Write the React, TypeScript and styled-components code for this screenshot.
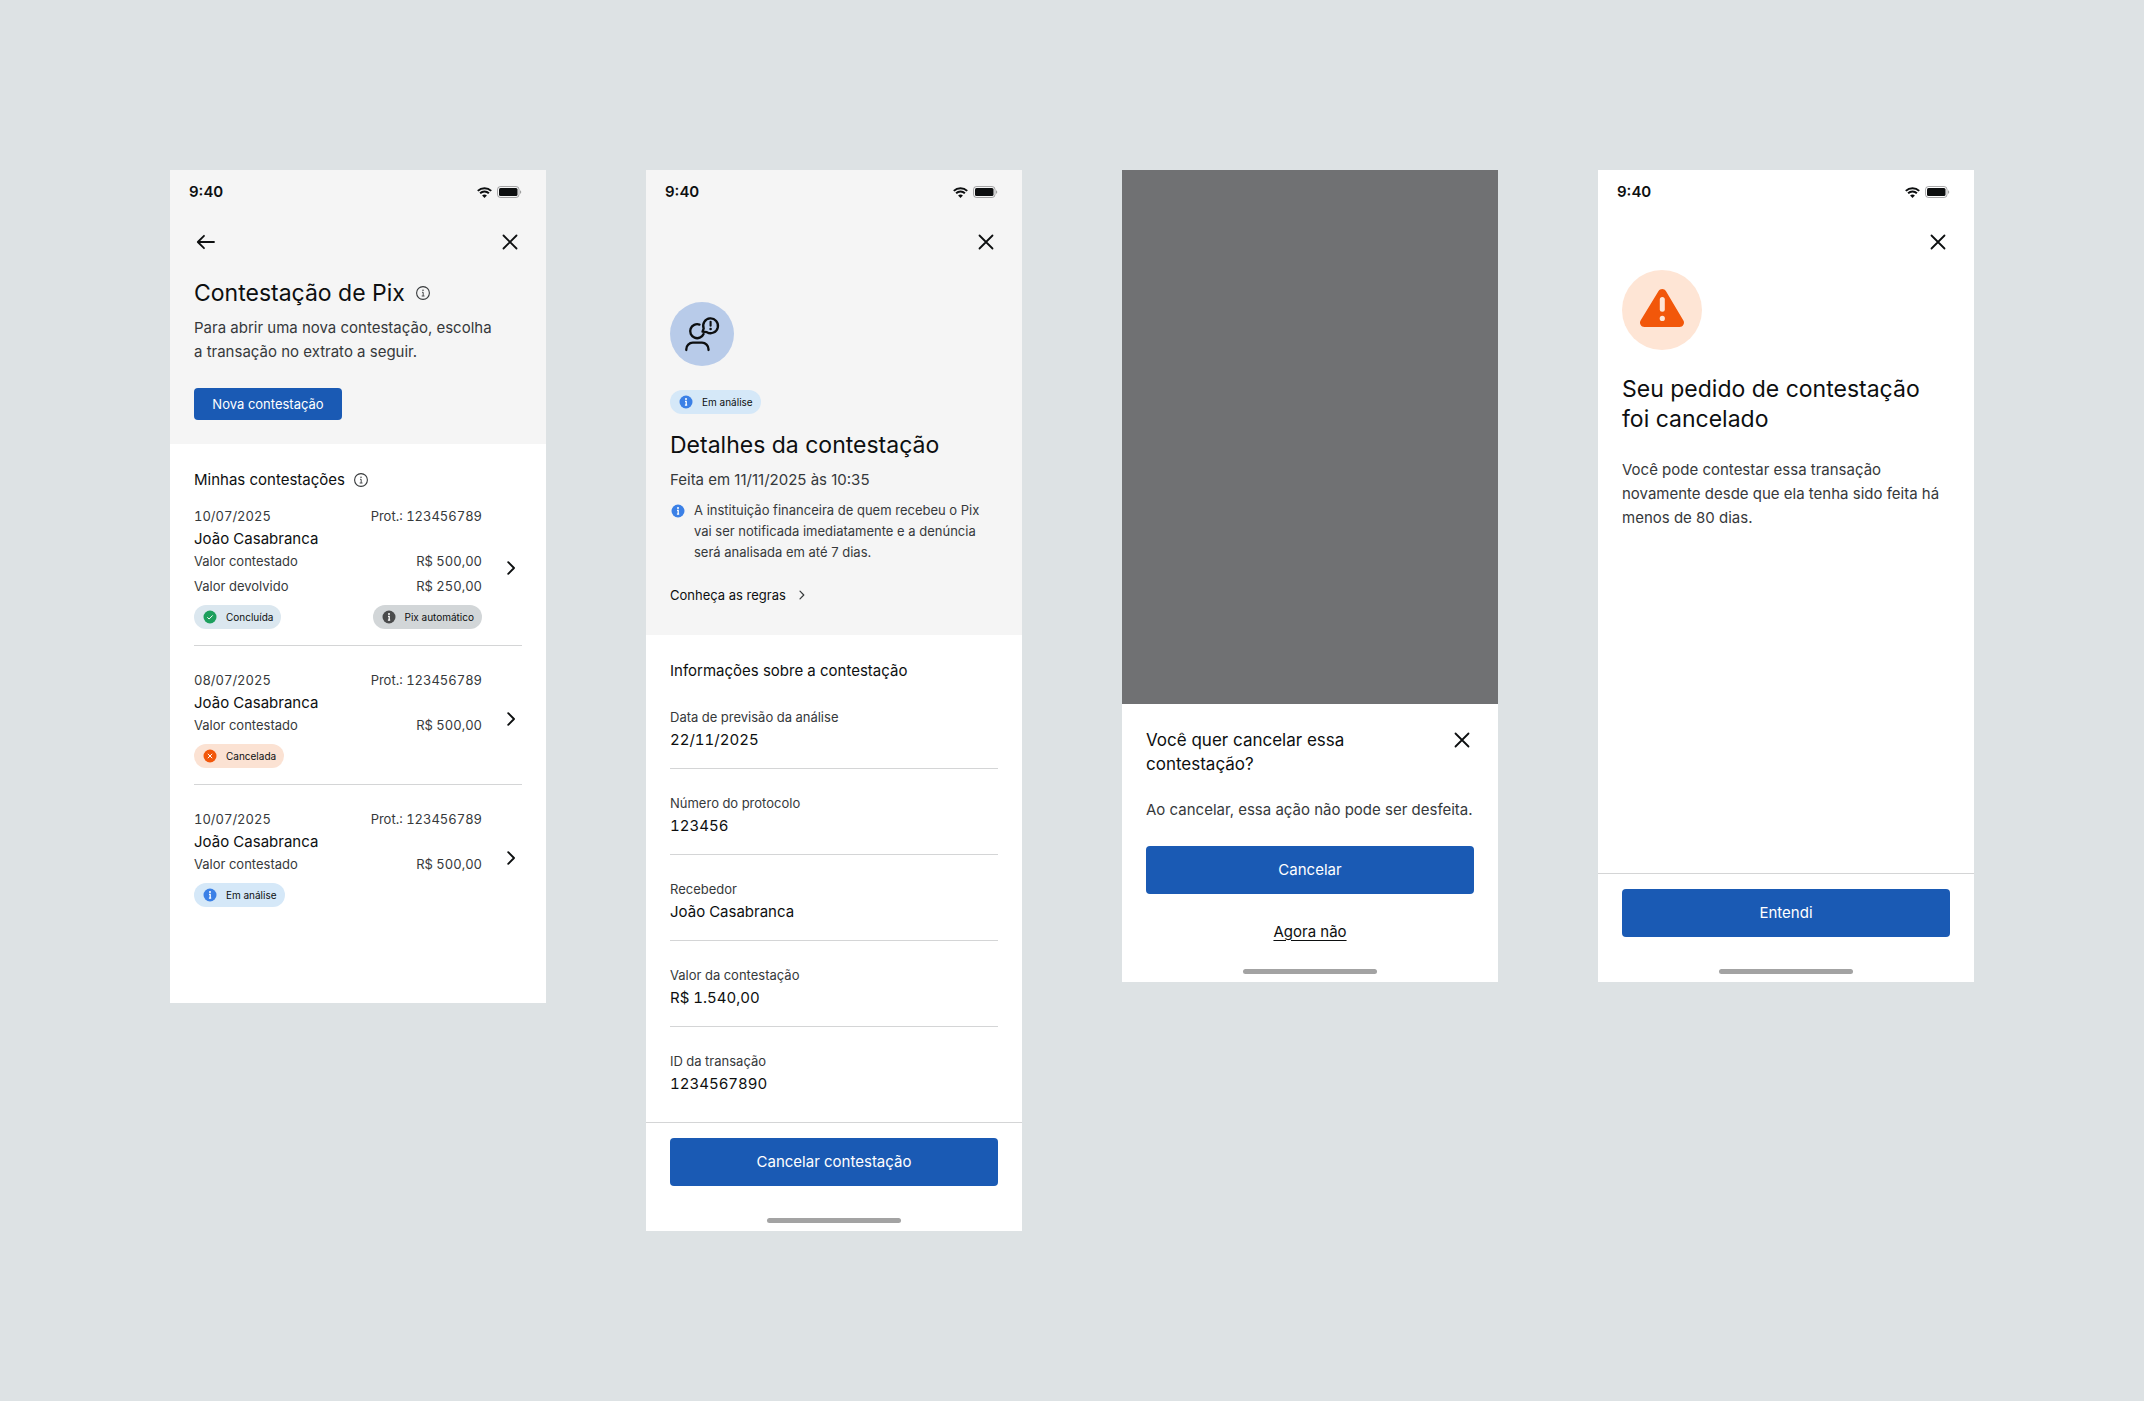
import React from "react";
import styled, { createGlobalStyle, ThemeProvider } from "styled-components";

const theme = {
  canvas: "#dde2e4",
  surface: "#ffffff",
  header: "#f5f5f5",
  ink: "#0d0f10",
  body: "#36393b",
  line: "#d4d5d6",
  primary: "#1a5ab4",
  danger: "#f2570a",
  success: "#1c9f5d",
  info: "#3b80e6",
  neutral: "#4a4b4c",
  scrim: "#707173",
  handle: "#a3a3a3",
};

const tones = {
  success: "#dbe7ef",
  danger: "#fbe2d3",
  info: "#d5e8f8",
  neutral: "#d2d6d8",
};
type Tone = keyof typeof tones;

const GlobalStyle = createGlobalStyle`
  *, *::before, *::after { box-sizing: border-box; }
  body {
    margin: 0;
    background: ${theme.canvas};
    color: ${theme.ink};
    font-family: Inter, "Open Sans", "Liberation Sans", sans-serif;
    font-size: 15px;
    line-height: 24px;
    font-weight: 400;
  }
  h1, h2, p, ul, dl, dd { margin: 0; padding: 0; }
  ul { list-style: none; }
  button { font: inherit; color: inherit; border: 0; background: none; padding: 0; cursor: pointer; }
  svg { display: block; flex: none; }
`;

const Board = styled.main`
  display: grid;
  grid-template-columns: repeat(4, minmax(0, 1fr));
  align-items: start;
  gap: 100px;
  padding: 170px;
`;

const Phone = styled.article`
  display: flex;
  flex-direction: column;
  min-height: 812px;
  background: ${(p) => p.theme.surface};
`;

const ListPhone = styled(Phone)`
  padding-bottom: 54px;
`;

const Top = styled.header<{ $plain?: boolean }>`
  background: ${(p) => (p.$plain ? "transparent" : p.theme.header)};
`;

const StatusBar = styled.div`
  display: flex;
  align-items: center;
  justify-content: space-between;
  height: 44px;
  padding: 0 24px 0 19px;
  font-weight: 600;
`;

const StatusIcons = styled.div`
  display: flex;
  align-items: center;
  gap: 5px;
`;

const NavBar = styled.nav`
  display: flex;
  align-items: center;
  height: 56px;
  padding: 0 24px;
`;

const IconButton = styled.button`
  display: flex;
  flex: none;
  width: 24px;
  height: 24px;
`;

const CloseButton = styled(IconButton)`
  margin-left: auto;
`;

const Intro = styled.div`
  display: flex;
  flex-direction: column;
  align-items: flex-start;
  gap: 8px;
  padding: 8px 24px 24px;
`;

const DetailsIntro = styled(Intro)`
  padding-top: 32px;
`;

const TitleRow = styled.div`
  display: flex;
  align-items: center;
  gap: 10px;
`;

const Title = styled.h1`
  font-size: 23px;
  line-height: 30px;
  font-weight: 400;
`;

const DetailsTitle = styled(Title)`
  margin-top: 8px;
`;

const SectionTitle = styled.h2`
  font-size: 15px;
  line-height: 24px;
  font-weight: 400;
`;

const Text = styled.p`
  color: ${(p) => p.theme.body};
`;

const Button = styled.button`
  width: 100%;
  height: 48px;
  border-radius: 4px;
  background: ${(p) => p.theme.primary};
  color: #fff;
`;

const SmallButton = styled(Button)`
  width: auto;
  min-width: 148px;
  height: 32px;
  margin-top: 16px;
  padding: 0 16px;
  font-size: 13px;
`;

const UnderlinedButton = styled.button`
  align-self: center;
  height: 43px;
  margin-top: 16px;
  text-decoration: underline;
  text-decoration-thickness: 1px;
  text-underline-offset: 3px;
`;

const Section = styled.section`
  padding: 24px 24px 26px;
`;

const SectionHead = styled.div`
  display: flex;
  align-items: center;
  gap: 8px;
  margin-bottom: 14px;
`;

const Dispute = styled.li`
  display: flex;
  align-items: center;
  gap: 16px;
  padding: 24px 0 16px;
  border-bottom: 1px solid ${(p) => p.theme.line};
  &:first-child { padding-top: 0; }
  &:last-child { border-bottom: 0; }
  & > button { margin-top: 0; }
`;

const DisputeBody = styled.div`
  flex: 1;
  min-width: 0;
`;

const Row = styled.div<{ $gap?: number }>`
  display: flex;
  justify-content: space-between;
  margin-top: ${(p) => p.$gap ?? 0}px;
  color: ${(p) => p.theme.body};
  font-size: 13px;
  line-height: 21px;
  font-variant-numeric: tabular-nums;
`;

const Name = styled.div`
  font-size: 15px;
  line-height: 24px;
`;

const Pill = styled.span<{ $tone: Tone }>`
  display: inline-flex;
  align-items: center;
  gap: 8px;
  height: 24px;
  padding: 0 8px;
  border-radius: 12px;
  background: ${(p) => tones[p.$tone]};
  color: ${(p) => p.theme.ink};
  font-size: 10px;
  line-height: 16px;
`;

const Badge = styled.div<{ $size: number; $color: string; $gap: number }>`
  width: ${(p) => p.$size}px;
  height: ${(p) => p.$size}px;
  margin-bottom: ${(p) => p.$gap}px;
  border-radius: 50%;
  background: ${(p) => p.$color};
`;

const Notice = styled.p`
  display: flex;
  gap: 8px;
  color: ${(p) => p.theme.body};
  font-size: 13px;
  line-height: 21px;
  svg { margin-top: 3px; }
`;

const RulesLink = styled.a`
  display: flex;
  align-items: center;
  gap: 8px;
  height: 32px;
  margin-top: 8px;
  color: inherit;
  font-size: 13px;
  text-decoration: none;
`;

const Facts = styled.dl`
  font-variant-numeric: tabular-nums;
`;

const Fact = styled.div`
  padding: 24px 0 16px;
  border-bottom: 1px solid ${(p) => p.theme.line};
  &:last-child { padding-bottom: 0; border-bottom: 0; }
  dt { color: ${(p) => p.theme.body}; font-size: 13px; line-height: 21px; }
`;

const Footer = styled.footer`
  margin-top: auto;
  padding: 15px 24px 16px;
  border-top: 1px solid ${(p) => p.theme.line};
`;

const HomeIndicator = styled.div`
  padding: 16px 0 8px;
  &::after {
    content: "";
    display: block;
    width: 134px;
    height: 5px;
    margin: 0 auto;
    border-radius: 3px;
    background: ${(p) => p.theme.handle};
  }
`;

const Scrim = styled.div`
  flex: 1;
  background: ${(p) => p.theme.scrim};
`;

const Sheet = styled.section`
  display: flex;
  flex-direction: column;
  padding: 24px 24px 0;
`;

const SheetHead = styled.div`
  display: flex;
  align-items: flex-start;
  gap: 16px;
  margin-bottom: 22px;
`;

const SheetTitle = styled.h1`
  flex: 1;
  font-size: 17px;
  line-height: 24px;
  font-weight: 400;
`;

const SheetText = styled(Text)`
  margin-bottom: 24px;
`;

const Result = styled.div`
  padding: 0 24px 24px;
`;

const ResultTitle = styled(Title)`
  margin-bottom: 24px;
`;

const CloseIcon = () => (
  <svg width="24" height="24" viewBox="0 0 24 24" fill="none" stroke={theme.ink} strokeWidth="1.8" strokeLinecap="round">
    <path d="M5.5 5.5l13 13M18.5 5.5l-13 13" />
  </svg>
);

const BackIcon = () => (
  <svg width="24" height="24" viewBox="0 0 24 24" fill="none" stroke={theme.ink} strokeWidth="1.8" strokeLinecap="round" strokeLinejoin="round">
    <path d="M20 12H4M10 5.8L3.8 12l6.2 6.2" />
  </svg>
);

const ChevronIcon = () => (
  <svg width="24" height="24" viewBox="0 0 24 24" fill="none" stroke={theme.ink} strokeWidth="1.9" strokeLinecap="round" strokeLinejoin="round">
    <path d="M10.2 6.2L16 12l-5.8 5.800" />
  </svg>
);

const SmallChevronIcon = () => (
  <svg width="16" height="16" viewBox="0 0 16 16" fill="none" stroke={theme.body} strokeWidth="1.2" strokeLinecap="round" strokeLinejoin="round">
    <path d="M6 4.200L9.800 8 6 11.8" />
  </svg>
);

const InfoOutlineIcon = () => (
  <svg width="16" height="16" viewBox="0 0 16 16" fill="none" stroke={theme.body}>
    <circle cx="8" cy="8" r="6.4" strokeWidth="1.1" />
    <path d="M7 7.300h1.200v3.600M6.700 11h2.800" strokeWidth="0.9" />
    <circle cx="8" cy="5.2" r="0.75" fill={theme.body} stroke="none" />
  </svg>
);

const glyphColor: Record<Tone, string> = {
  success: theme.success,
  danger: theme.danger,
  info: theme.info,
  neutral: theme.neutral,
};

const ToneIcon = ({ tone }: { tone: Tone }) => (
  <svg width="16" height="16" viewBox="0 0 16 16" fill="none">
    <circle cx="8" cy="8" r="6.5" fill={glyphColor[tone]} />
    {tone === "success" && <path d="M5.300 8.300l1.800 1.700 3.600-3.600" stroke="#fff" />}
    {tone === "danger" && <path d="M5.800 5.800l4.400 4.400M10.200 5.800l-4.400 4.400" stroke="#fff" />}
    {(tone === "info" || tone === "neutral") && (
      <>
        <circle cx="8" cy="5.1" r="1" fill="#fff" />
        <path d="M7 7.400h1.200v3.400M6.900 11.100h2.300" stroke="#fff" strokeWidth="1.3" />
      </>
    )}
  </svg>
);

const WifiIcon = () => (
  <svg width="15" height="11" viewBox="0 0 15 11" fill="none" stroke={theme.ink} strokeWidth="2">
    <path d="M0.800 3.900C4.600 0.200 10.400 0.200 14.200 3.900" />
    <path d="M3.100 6.300c2.500-2.400 6.300-2.400 8.800 0" />
    <path d="M5.100 8.400c1.400-1.300 3.400-1.300 4.800 0L7.500 10.900z" fill={theme.ink} stroke="none" />
  </svg>
);

const BatteryIcon = () => (
  <svg width="25" height="12" viewBox="0 0 25 12" fill={theme.ink}>
    <rect x="0.5" y="0.5" width="21.5" height="11" rx="3" fill="none" stroke={theme.ink} strokeOpacity="0.35" />
    <rect x="2" y="2" width="18.5" height="8" rx="1.5" />
    <path d="M23.200 4.200v3.600c1.300-0.500 1.300-3.100 0-3.600z" fillOpacity="0.45" />
  </svg>
);

const PersonAlertIcon = () => (
  <svg width="64" height="64" viewBox="0 0 64 64" fill="none" stroke={theme.ink} strokeWidth="2.3" strokeLinecap="round" strokeLinejoin="round">
    <path d="M29.500 22.600A7 7 0 1 0 33.600 32" />
    <path d="M16.300 48v-0.800a6.500 6.500 0 0 1 6.500-6.500h9.200a6.500 6.500 0 0 1 6.500 6.500v0.800" />
    <path d="M36.900 30.200A7.400 7.400 0 1 0 33.700 26.500L32.500 29.600z" />
    <path d="M40.600 19.800v4" strokeWidth="2.1" />
    <circle cx="40.6" cy="27" r="1.3" fill={theme.ink} stroke="none" />
  </svg>
);

const WarningIcon = () => (
  <svg width="80" height="80" viewBox="0 0 80 80" fill="none">
    <path d="M36.400 21.200c1.700-2.900 5.900-2.900 7.600 0l17.400 29.300c1.700 2.900-0.400 6.500-3.800 6.500H22.400c-3.400 0-5.500-3.600-3.800-6.500z" fill={theme.danger} />
    <path d="M40.300 29.500v9.800" stroke="#fee5d5" strokeWidth="5" strokeLinecap="round" />
    <circle cx="40.3" cy="48.4" r="2.6" fill="#fee5d5" />
  </svg>
);

const Status = () => (
  <StatusBar>
    <span>9:40</span>
    <StatusIcons>
      <WifiIcon />
      <BatteryIcon />
    </StatusIcons>
  </StatusBar>
);

const Nav = ({ back }: { back?: boolean }) => (
  <NavBar>
    {back && (
      <IconButton type="button" aria-label="Voltar">
        <BackIcon />
      </IconButton>
    )}
    <CloseButton type="button" aria-label="Fechar">
      <CloseIcon />
    </CloseButton>
  </NavBar>
);

const Tag = ({ tone, label }: { tone: Tone; label: string }) => (
  <Pill $tone={tone}>
    <ToneIcon tone={tone} />
    {label}
  </Pill>
);

interface DisputeData {
  id: number;
  date: string;
  refunded?: string;
  tone: Tone;
  status: string;
  automatic?: boolean;
}

const disputes: DisputeData[] = [
  { id: 1, date: "10/07/2025", refunded: "R$ 250,00", tone: "success", status: "Concluída", automatic: true },
  { id: 2, date: "08/07/2025", tone: "danger", status: "Cancelada" },
  { id: 3, date: "10/07/2025", tone: "info", status: "Em análise" },
];

const facts = [
  ["Data de previsão da análise", "22/11/2025"],
  ["Número do protocolo", "123456"],
  ["Recebedor", "João Casabranca"],
  ["Valor da contestação", "R$ 1.540,00"],
  ["ID da transação", "1234567890"],
];

const ListScreen = () => (
  <ListPhone>
    <Top>
      <Status />
      <Nav back />
      <Intro>
        <TitleRow>
          <Title>Contestação de Pix</Title>
          <InfoOutlineIcon />
        </TitleRow>
        <Text>
          Para abrir uma nova contestação, escolha
          <br />a transação no extrato a seguir.
        </Text>
        <SmallButton type="button">Nova contestação</SmallButton>
      </Intro>
    </Top>
    <Section>
      <SectionHead>
        <SectionTitle>Minhas contestações</SectionTitle>
        <InfoOutlineIcon />
      </SectionHead>
      <ul>
        {disputes.map((d) => (
          <Dispute key={d.id}>
            <DisputeBody>
              <Row>
                <span>{d.date}</span>
                <span>Prot.: 123456789</span>
              </Row>
              <Name>João Casabranca</Name>
              <Row>
                <span>Valor contestado</span>
                <span>R$ 500,00</span>
              </Row>
              {d.refunded && (
                <Row $gap={4}>
                  <span>Valor devolvido</span>
                  <span>{d.refunded}</span>
                </Row>
              )}
              <Row $gap={8}>
                <Tag tone={d.tone} label={d.status} />
                {d.automatic && <Tag tone="neutral" label="Pix automático" />}
              </Row>
            </DisputeBody>
            <IconButton type="button" aria-label="Ver detalhes">
              <ChevronIcon />
            </IconButton>
          </Dispute>
        ))}
      </ul>
    </Section>
  </ListPhone>
);

const DetailsScreen = () => (
  <Phone>
    <Top>
      <Status />
      <Nav />
      <DetailsIntro>
        <Badge $size={64} $color="#b8cbe9" $gap={16}>
          <PersonAlertIcon />
        </Badge>
        <Tag tone="info" label="Em análise" />
        <DetailsTitle>Detalhes da contestação</DetailsTitle>
        <Text>Feita em 11/11/2025 às 10:35</Text>
        <Notice>
          <ToneIcon tone="info" />
          <span>
            A instituição financeira de quem recebeu o Pix
            <br />
            vai ser notificada imediatamente e a denúncia
            <br />
            será analisada em até 7 dias.
          </span>
        </Notice>
        <RulesLink href="#regras">
          Conheça as regras
          <SmallChevronIcon />
        </RulesLink>
      </DetailsIntro>
    </Top>
    <Section>
      <SectionTitle>Informações sobre a contestação</SectionTitle>
      <Facts>
        {facts.map(([label, value]) => (
          <Fact key={label}>
            <dt>{label}</dt>
            <dd>{value}</dd>
          </Fact>
        ))}
      </Facts>
    </Section>
    <Footer>
      <Button type="button">Cancelar contestação</Button>
    </Footer>
    <HomeIndicator />
  </Phone>
);

const ConfirmScreen = () => (
  <Phone>
    <Scrim />
    <Sheet role="dialog" aria-labelledby="confirm-title">
      <SheetHead>
        <SheetTitle id="confirm-title">Você quer cancelar essa contestação?</SheetTitle>
        <CloseButton type="button" aria-label="Fechar">
          <CloseIcon />
        </CloseButton>
      </SheetHead>
      <SheetText>Ao cancelar, essa ação não pode ser desfeita.</SheetText>
      <Button type="button">Cancelar</Button>
      <UnderlinedButton type="button">Agora não</UnderlinedButton>
    </Sheet>
    <HomeIndicator />
  </Phone>
);

const CancelledScreen = () => (
  <Phone>
    <Top $plain>
      <Status />
      <Nav />
    </Top>
    <Result>
      <Badge $size={80} $color="#fee5d5" $gap={24}>
        <WarningIcon />
      </Badge>
      <ResultTitle>
        Seu pedido de contestação
        <br />
        foi cancelado
      </ResultTitle>
      <Text>Você pode contestar essa transação novamente desde que ela tenha sido feita há menos de 80 dias.</Text>
    </Result>
    <Footer>
      <Button type="button">Entendi</Button>
    </Footer>
    <HomeIndicator />
  </Phone>
);

export default function App() {
  return (
    <ThemeProvider theme={theme}>
      <GlobalStyle />
      <Board>
        <ListScreen />
        <DetailsScreen />
        <ConfirmScreen />
        <CancelledScreen />
      </Board>
    </ThemeProvider>
  );
}
